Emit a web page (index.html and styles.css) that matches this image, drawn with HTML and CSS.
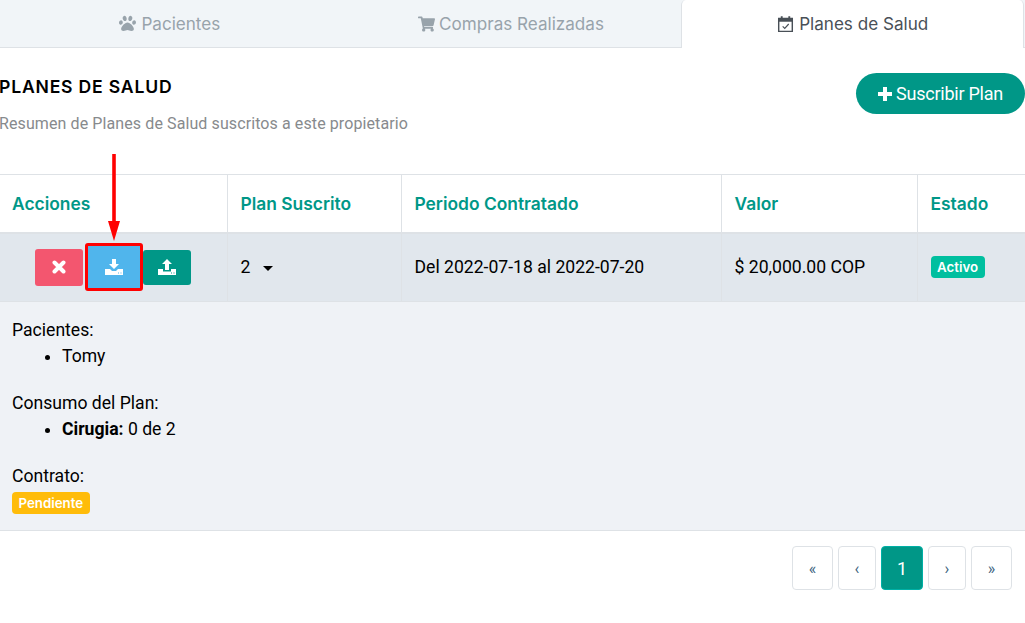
FILE: index.html
```html
<!DOCTYPE html>
<html lang="es">
<head>
<meta charset="utf-8">
<title>Planes de Salud</title>
<link rel="stylesheet" href="styles.css">
</head>
<body>
<nav class="tabs">
  <a class="tab"><svg class="tab-icon" viewBox="0 0 512 512"><path fill="currentColor" d="M256 224c-79 0-192 122-192 199 0 35 27 57 72 57 49 0 81-25 120-25 39 0 72 25 120 25 45 0 72-22 72-57 0-77-113-199-192-199zM76 163c-29-8-62 15-73 50-11 35 6 70 36 78 30 8 62-15 73-50 11-35-6-70-36-78z"/><path fill="currentColor" d="M193 179c31-8 47-49 35-91C216 46 180 19 149 27c-31 8-47 49-35 91 12 42 48 69 79 61zM319 179c31 8 67-19 79-61 12-42-4-83-35-91-31-8-67 19-79 61-12 42 4 83 35 91zM473 163c-29-8-62 15-73 50-11 35 6 70 36 78 30 8 62-15 73-50 11-35-6-70-36-78z"/></svg>Pacientes</a>
  <a class="tab"><svg class="tab-icon cart" viewBox="0 0 576 512"><path fill="currentColor" d="M528 301l47-208c3-15-8-29-23-29H159l-9-45C148 8 138 0 126 0H24C11 0 0 11 0 24v16c0 13 11 24 24 24h70l70 343c-17 10-28 28-28 49 0 31 25 56 56 56s56-25 56-56c0-16-6-30-17-40h210c-11 10-17 24-17 40 0 31 25 56 56 56s56-25 56-56c0-22-13-41-32-50l5-24c3-15-8-29-23-29H211l-7-32h301c11 0 21-8 23-19z"/></svg>Compras Realizadas</a>
  <a class="tab tab-active"><svg class="tab-icon calendar" viewBox="0 0 18 18"><path fill="none" stroke="currentColor" stroke-width="1.500" d="M1.800 3.200h14.400v13.600H1.800z"/><path fill="currentColor" d="M1.800 3.200h14.400v3.400H1.800z"/><path fill="none" stroke="currentColor" stroke-width="2" d="M5 .8v3.400M13 .8v3.400"/><path fill="none" stroke="currentColor" stroke-width="1.200" d="M6 11.500l2.200 2.200L12.400 9"/></svg>Planes de Salud</a>
</nav>

<main class="content">
  <header class="section-head">
    <div>
      <h1 class="section-title">PLANES DE SALUD</h1>
      <p class="section-sub">Resumen de Planes de Salud suscritos a este propietario</p>
    </div>
    <button class="subscribe"><svg class="plus" viewBox="0 0 14 14"><path fill="currentColor" d="M5 0h4v5h5v4H9v5H5V9H0V5h5z"/></svg>Suscribir Plan</button>
  </header>

  <table class="plans">
    <colgroup>
      <col class="c1"><col class="c2"><col class="c3"><col class="c4"><col class="c5">
    </colgroup>
    <thead>
      <tr>
        <th>Acciones</th>
        <th>Plan Suscrito</th>
        <th>Periodo Contratado</th>
        <th>Valor</th>
        <th>Estado</th>
      </tr>
    </thead>
    <tbody>
      <tr class="row-main">
        <td>
          <div class="actions">
            <button class="act act-del"><svg class="ico-x" viewBox="0 0 14 14"><path fill="none" stroke="currentColor" stroke-width="4" stroke-linecap="round" d="M2.500 2.500l9 9M11.500 2.500l-9 9"/></svg></button>
            <button class="act act-down"><svg class="ico-tray" viewBox="0 0 18 16"><path fill="currentColor" d="M7 0h4v5h3l-5 5-5-5h3z"/><path fill="currentColor" fill-rule="evenodd" d="M0 10h5l2 2h4l2-2h5v6H0zm13 3.500h1v1h-1zm2.500 0h1v1h-1z"/></svg></button>
            <button class="act act-up"><svg class="ico-tray" viewBox="0 0 18 16"><path fill="currentColor" d="M9 0l5 5h-3v6H7V5H4z"/><path fill="currentColor" fill-rule="evenodd" d="M0 10h5v2.500h8V10h5v6H0zm13 3.500h1v1h-1zm2.500 0h1v1h-1z"/></svg></button>
          </div>
        </td>
        <td><span class="plan-num">2</span><span class="caret"></span></td>
        <td>Del 2022-07-18 al 2022-07-20</td>
        <td>$ 20,000.00 COP</td>
        <td><span class="badge badge-ok">Activo</span></td>
      </tr>
      <tr class="row-detail">
        <td colspan="5">
          <div class="detail-label">Pacientes:</div>
          <ul class="detail-list"><li>Tomy</li></ul>
          <div class="detail-label">Consumo del Plan:</div>
          <ul class="detail-list"><li><strong>Cirugia:</strong> 0 de 2</li></ul>
          <div class="detail-label">Contrato:</div>
          <span class="badge badge-wait">Pendiente</span>
        </td>
      </tr>
    </tbody>
  </table>

  <nav class="pager">
    <a class="page">«</a>
    <a class="page">‹</a>
    <a class="page page-on">1</a>
    <a class="page">›</a>
    <a class="page">»</a>
  </nav>
</main>

<svg class="arrow" viewBox="0 0 14 88"><path fill="#f00" d="M5.200 0h3.600v68H5.200z"/><path fill="#f00" d="M1 67h12l-6 20z"/></svg>
</body>
</html>
```

FILE: styles.css
```css
* { box-sizing: border-box; }
html, body { margin: 0; padding: 0; }
body {
  position: relative;
  width: 1025px;
  height: 623px;
  overflow: hidden;
  background: #fff;
  font-family: Roboto, "Liberation Sans", sans-serif;
  font-size: 17.6px;
  color: #000;
}
.tabs {
  display: flex;
  height: 48px;
  background: #f1f5f8;
  border-bottom: 1px solid #dee2e6;
  padding-right: 1px;
}
.tab {
  flex: 1 1 0;
  display: flex;
  align-items: center;
  justify-content: center;
  gap: 4px;
  color: #98a3ab;
  font-family: Inter, Roboto, sans-serif;
  font-size: 17.1px;
}
.tab-active {
  height: 48px;
  padding-bottom: 1px;
  background: #fff;
  color: #495057;
  border: 1px solid #dee2e6;
  border-bottom: 0;
  border-top: 0;
  border-radius: 5px 5px 0 0;
}
.tab-icon { width: 19px; height: 17px; flex: none; margin-left: -2px; }
.cart { width: 17px; height: 16px; margin-left: 0; }
.calendar { width: 17px; height: 18px; margin-left: 0; margin-right: 1px; }

.section-head {
  display: flex;
  justify-content: space-between;
  align-items: flex-start;
  height: 126px;
  padding-top: 25px;
}
.section-title {
  margin: 0 0 0 -1px;
  font-family: Inter, Roboto, sans-serif;
  font-size: 17.6px;
  line-height: 28px;
  font-weight: 600;
  letter-spacing: 0.8px;
}
.section-sub {
  margin: 11px 0 0 -1px;
  font-size: 16px;
  line-height: 24px;
  color: #878a8d;
  letter-spacing: 0.1px;
}
.subscribe {
  display: flex;
  align-items: center;
  justify-content: center;
  gap: 4px;
  width: 169px;
  height: 41px;
  border: 0;
  border-radius: 21px;
  background: #009787;
  color: #fff;
  font-family: Roboto, sans-serif;
  font-size: 18px;
  letter-spacing: -0.25px;
  padding: 0;
}
.plus { width: 14px; height: 14px; }

.plans {
  width: 1025px;
  border-collapse: collapse;
  table-layout: fixed;
}
.c1 { width: 227px; }
.c2 { width: 174px; }
.c3 { width: 320px; }
.c4 { width: 196px; }
.c5 { width: 108px; }
.plans th, .plans td {
  padding: 0 13px;
  text-align: left;
  border: 1px solid #dee2e6;
}
.plans th:first-child, .plans td:first-child {
  border-left: 0;
  padding-left: 12px;
}
.plans th {
  height: 58px;
  color: #009787;
  font-family: Inter, Roboto, sans-serif;
  font-size: 17.4px;
  font-weight: 600;
  border-bottom-width: 2px;
}
.row-main td {
  height: 69px;
  background: #e1e7ed;
}
.row-detail td {
  height: 229px;
  padding-top: 15px;
  background: #eff2f6;
  vertical-align: top;
  line-height: 26.4px;
}
.actions {
  display: flex;
  justify-content: center;
  align-items: center;
}
.act {
  display: flex;
  align-items: center;
  justify-content: center;
  border: 0;
  padding: 0;
  border-radius: 3px;
  color: #fff;
}
.act-del { width: 48px; height: 37px; background: #f3566f; margin-right: 2px; }
.act-down {
  width: 58px;
  height: 48px;
  background: #50b5ec;
  border: 3px solid #f00;
  border-radius: 3px;
}
.act-up { width: 48px; height: 35px; background: #009787; }
.ico-x { width: 14px; height: 14px; }
.ico-tray { width: 18px; height: 16px; }
.plan-num { margin-right: 13px; }
.caret {
  display: inline-block;
  vertical-align: 2px;
  border-top: 5px solid #000;
  border-left: 5.500px solid transparent;
  border-right: 5.500px solid transparent;
}
.badge {
  display: inline-block;
  height: 22px;
  padding: 0 6.500px;
  border-radius: 4px;
  color: #fff;
  font-family: Inter, Roboto, sans-serif;
  font-size: 13.3px;
  font-weight: 600;
  line-height: 22px;
}
.badge-ok { background: #00bf9f; }
.badge-wait { display: block; width: max-content; background: #ffbc0a; margin-top: 3px; }
.detail-list {
  margin: 0 0 20px;
  padding-left: 50px;
}
.detail-list strong { font-weight: 700; }

.pager {
  display: flex;
  justify-content: flex-end;
  gap: 5px;
  margin-top: 15px;
  padding-right: 13px;
}
.page {
  display: flex;
  align-items: center;
  justify-content: center;
  width: 41px;
  height: 44px;
  border: 1px solid #dee2e6;
  border-radius: 4px;
  color: #3a5f7d;
  font-size: 16px;
}
.page:nth-child(2), .page:nth-child(4) { width: 38px; }
.page-on {
  width: 42px;
  background: #009787;
  border-color: #00b0a6;
  color: #fff;
  font-size: 18px;
}
.arrow {
  position: absolute;
  left: 107px;
  top: 154px;
  width: 14px;
  height: 88px;
}
```
